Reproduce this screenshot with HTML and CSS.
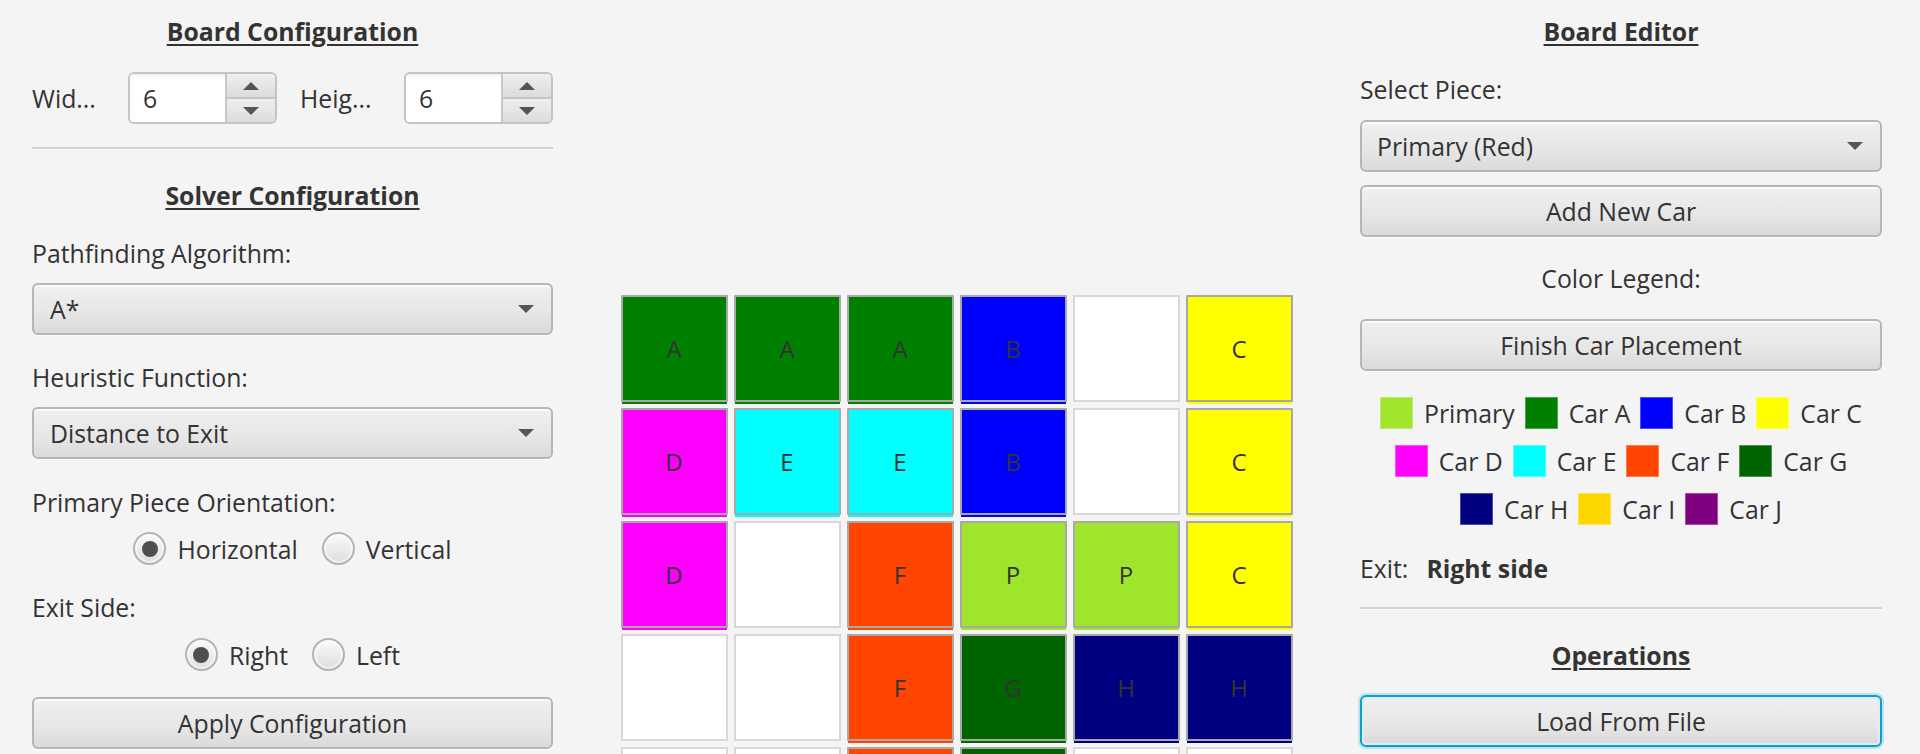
FILE: index.html
```html
<!DOCTYPE html>
<html lang="en">
<head>
<meta charset="utf-8">
<title>Rush Hour Solver</title>
<link rel="stylesheet" href="styles.css">
</head>
<body>
<div class="app">
  <aside class="panel panel-left">
    <div class="title">Board Configuration</div>
    <div class="dim-row">
      <span class="dim-label dim-label-w">Wid...</span>
      <div class="spinner">
        <div class="spinner-field">6</div>
        <div class="spinner-buttons">
          <div class="spin-btn"><span class="arrow-up"></span></div>
          <div class="spin-btn"><span class="arrow-down"></span></div>
        </div>
      </div>
      <span class="dim-label dim-label-h">Heig...</span>
      <div class="spinner">
        <div class="spinner-field">6</div>
        <div class="spinner-buttons">
          <div class="spin-btn"><span class="arrow-up"></span></div>
          <div class="spin-btn"><span class="arrow-down"></span></div>
        </div>
      </div>
    </div>
    <div class="separator sep-left"></div>
    <div class="title title-solver">Solver Configuration</div>
    <div class="label lbl-algo">Pathfinding Algorithm:</div>
    <div class="combo combo-algo">A*</div>
    <div class="label lbl-heur">Heuristic Function:</div>
    <div class="combo combo-heur">Distance to Exit</div>
    <div class="label lbl-orient">Primary Piece Orientation:</div>
    <div class="radio-row radio-row-orient">
      <div class="radio-item"><span class="radio radio-on"></span><span>Horizontal</span></div>
      <div class="radio-item"><span class="radio"></span><span>Vertical</span></div>
    </div>
    <div class="label lbl-exit">Exit Side:</div>
    <div class="radio-row radio-row-exit">
      <div class="radio-item"><span class="radio radio-on"></span><span>Right</span></div>
      <div class="radio-item"><span class="radio"></span><span>Left</span></div>
    </div>
    <div class="btn btn-apply">Apply Configuration</div>
  </aside>

  <main class="board-area">
    <div class="board">
      <div class="cell car" style="--c:#008000">A</div>
      <div class="cell car" style="--c:#008000">A</div>
      <div class="cell car" style="--c:#008000">A</div>
      <div class="cell car" style="--c:#0000ff">B</div>
      <div class="cell empty"></div>
      <div class="cell car" style="--c:#ffff00">C</div>

      <div class="cell car" style="--c:#ff00ff">D</div>
      <div class="cell car" style="--c:#00ffff">E</div>
      <div class="cell car" style="--c:#00ffff">E</div>
      <div class="cell car" style="--c:#0000ff">B</div>
      <div class="cell empty"></div>
      <div class="cell car" style="--c:#ffff00">C</div>

      <div class="cell car" style="--c:#ff00ff">D</div>
      <div class="cell empty"></div>
      <div class="cell car" style="--c:#ff4500">F</div>
      <div class="cell car" style="--c:#9fe52c">P</div>
      <div class="cell car" style="--c:#9fe52c">P</div>
      <div class="cell car" style="--c:#ffff00">C</div>

      <div class="cell empty"></div>
      <div class="cell empty"></div>
      <div class="cell car" style="--c:#ff4500">F</div>
      <div class="cell car" style="--c:#006400">G</div>
      <div class="cell car" style="--c:#000080">H</div>
      <div class="cell car" style="--c:#000080">H</div>

      <div class="cell empty"></div>
      <div class="cell empty"></div>
      <div class="cell car" style="--c:#ff4500"></div>
      <div class="cell car" style="--c:#006400"></div>
      <div class="cell empty"></div>
      <div class="cell empty"></div>
    </div>
  </main>

  <aside class="panel panel-right">
    <div class="title">Board Editor</div>
    <div class="label lbl-select">Select Piece:</div>
    <div class="combo combo-piece">Primary (Red)</div>
    <div class="btn btn-add">Add New Car</div>
    <div class="label label-center lbl-legend">Color Legend:</div>
    <div class="btn btn-finish">Finish Car Placement</div>
    <div class="legend">
      <div class="legend-row">
        <div class="legend-item"><span class="swatch" style="--c:#9fe52c"></span><span>Primary</span></div>
        <div class="legend-item"><span class="swatch" style="--c:#008000"></span><span>Car A</span></div>
        <div class="legend-item"><span class="swatch" style="--c:#0000ff"></span><span>Car B</span></div>
        <div class="legend-item"><span class="swatch" style="--c:#ffff00"></span><span>Car C</span></div>
      </div>
      <div class="legend-row">
        <div class="legend-item"><span class="swatch" style="--c:#ff00ff"></span><span>Car D</span></div>
        <div class="legend-item"><span class="swatch" style="--c:#00ffff"></span><span>Car E</span></div>
        <div class="legend-item"><span class="swatch" style="--c:#ff4500"></span><span>Car F</span></div>
        <div class="legend-item"><span class="swatch" style="--c:#006400"></span><span>Car G</span></div>
      </div>
      <div class="legend-row">
        <div class="legend-item"><span class="swatch" style="--c:#000080"></span><span>Car H</span></div>
        <div class="legend-item"><span class="swatch" style="--c:#ffd700"></span><span>Car I</span></div>
        <div class="legend-item"><span class="swatch" style="--c:#800080"></span><span>Car J</span></div>
      </div>
    </div>
    <div class="exit-row"><span>Exit:</span><span class="exit-value">Right side</span></div>
    <div class="separator sep-right"></div>
    <div class="title title-ops">Operations</div>
    <div class="btn btn-focused btn-load">Load From File</div>
  </aside>
</div>
</body>
</html>
```

FILE: styles.css
```css
html, body {
  margin: 0;
  padding: 0;
  height: 754px;
  overflow: hidden;
  background: #f4f4f4;
}

body {
  font-family: "Open Sans", "Noto Sans", sans-serif;
  font-size: 24.8px;
  color: #333333;
}

.app {
  display: flex;
  height: 754px;
  padding: 0 38px 0 32px;
  box-sizing: border-box;
  overflow: hidden;
}

.panel {
  flex: none;
  display: flex;
  flex-direction: column;
  padding-top: 14px;
}

.panel-left { width: 521px; }
.panel-right { width: 522px; }

.title {
  height: 32px;
  line-height: 35px;
  text-align: center;
  font-weight: 700;
  text-decoration: underline;
  text-decoration-thickness: 2px;
  text-underline-offset: 3px;
  white-space: nowrap;
}

.label {
  height: 32px;
  line-height: 35px;
  white-space: nowrap;
}

.label-center { text-align: center; }

/* ---------- spinner row ---------- */
.dim-row {
  display: flex;
  align-items: center;
  margin-top: 26px;
  height: 52px;
}

.dim-label { white-space: nowrap; }
.dim-label-w { width: 96px; }
.dim-label-h { width: 104px; margin-left: 23px; }

.spinner {
  width: 149px;
  height: 52px;
  box-sizing: border-box;
  border: 2px solid #c4c4c4;
  border-radius: 6px;
  display: flex;
  overflow: hidden;
  background: #ffffff;
}

.spinner-field {
  flex: 1;
  padding-left: 13px;
  line-height: 48px;
  background: linear-gradient(to bottom, #f0f0f0 0, #ffffff 4px);
}

.spinner-buttons {
  width: 48px;
  display: flex;
  flex-direction: column;
  border-left: 2px solid #c8c8c8;
}

.spin-btn {
  flex: 1;
  display: flex;
  align-items: center;
  justify-content: center;
  background: linear-gradient(to bottom, #efefef, #dcdcdc);
}

.spin-btn + .spin-btn { border-top: 2px solid #c4c4c4; }

.arrow-up {
  width: 0;
  height: 0;
  border-left: 8px solid transparent;
  border-right: 8px solid transparent;
  border-bottom: 8px solid #555555;
}

.arrow-down {
  width: 0;
  height: 0;
  border-left: 8px solid transparent;
  border-right: 8px solid transparent;
  border-top: 8px solid #555555;
}

/* ---------- separators ---------- */
.separator {
  height: 2px;
  background: #d3d3d3;
  border-bottom: 1px solid #fbfbfb;
}

.sep-left { margin-top: 23px; }
.sep-right { margin-top: 24px; }

/* ---------- combo & buttons ---------- */
.combo,
.btn {
  height: 52px;
  box-sizing: border-box;
  border: 2px solid #b6b6b6;
  border-radius: 6px;
  background: linear-gradient(to bottom, #f0f0f0 0%, #e6e6e6 60%, #dadada 100%);
  box-shadow: inset 0 2px 0 rgba(255, 255, 255, 0.75), 0 1px 0 rgba(255, 255, 255, 0.9);
  line-height: 48px;
  white-space: nowrap;
}

.combo {
  position: relative;
  padding-left: 16px;
}

.combo::after {
  content: "";
  position: absolute;
  right: 17px;
  top: 20px;
  width: 0;
  height: 0;
  border-left: 8px solid transparent;
  border-right: 8px solid transparent;
  border-top: 8px solid #555555;
}

.combo-piece { padding-left: 15px; }

.btn { text-align: center; }

.btn-focused {
  border-color: #0b9fd6;
  box-shadow: inset 0 0 0 2px #dcedf4, 0 0 0 2px rgba(3, 158, 211, 0.22);
}

/* ---------- left panel spacing ---------- */
.title-solver { margin-top: 28px; }
.lbl-algo { margin-top: 26px; }
.combo-algo { margin-top: 15px; }
.lbl-heur { margin-top: 25px; }
.combo-heur { margin-top: 15px; }
.lbl-orient { margin-top: 26px; }
.radio-row-orient { margin-top: 15px; }
.lbl-exit { margin-top: 25px; }
.radio-row-exit { margin-top: 16px; }
.btn-apply { margin-top: 26px; }

/* ---------- radios ---------- */
.radio-row {
  display: flex;
  justify-content: center;
  align-items: center;
  gap: 24px;
  height: 33px;
}

.radio-item {
  display: flex;
  align-items: center;
  gap: 11px;
  white-space: nowrap;
}

.radio {
  width: 33px;
  height: 33px;
  box-sizing: border-box;
  border-radius: 50%;
  border: 2px solid #b4b4b4;
  background: linear-gradient(to bottom, #fafafa, #dedede);
  box-shadow: inset 0 0 0 2px rgba(255, 255, 255, 0.55);
  display: flex;
  align-items: center;
  justify-content: center;
}

.radio-on::after {
  content: "";
  width: 16px;
  height: 16px;
  border-radius: 50%;
  background: #4e4e4e;
}

/* ---------- board ---------- */
.board-area {
  flex: 1;
  display: flex;
  justify-content: center;
  padding-top: 295px;
  overflow: hidden;
}

.board {
  display: grid;
  grid-template-columns: repeat(6, 107px);
  grid-auto-rows: 107px;
  gap: 6px;
  align-self: flex-start;
}

.cell {
  box-sizing: border-box;
  display: flex;
  align-items: center;
  justify-content: center;
  font-size: 24px;
  color: #333333;
}

.car {
  background: var(--c);
  border: 2px solid #a8a8a8;
  box-shadow: 0 3px 0 -1px var(--c);
  border-radius: 1px;
}

.empty {
  background: #ffffff;
  border: 2px solid #d8d8d8;
}

/* ---------- right panel spacing ---------- */
.lbl-select { margin-top: 26px; }
.combo-piece { margin-top: 16px; }
.btn-add { margin-top: 13px; }
.lbl-legend { margin-top: 24px; line-height: 34px; }
.btn-finish { margin-top: 26px; }

.legend {
  margin-top: 26px;
  display: flex;
  flex-direction: column;
  gap: 16px;
}

.legend-row {
  display: flex;
  justify-content: center;
  gap: 10px;
  height: 32px;
}

.legend-item {
  display: flex;
  align-items: center;
  gap: 11px;
  line-height: 34px;
  white-space: nowrap;
}

.swatch {
  width: 33px;
  height: 32px;
  background: var(--c);
  box-shadow: inset 0 0 0 1px rgba(255, 255, 255, 0.3);
}

.exit-row {
  margin-top: 26px;
  height: 32px;
  line-height: 34px;
  display: flex;
  white-space: nowrap;
}

.exit-value {
  margin-left: 18px;
  font-weight: 700;
}

.title-ops { margin-top: 28px; }
.btn-load { margin-top: 25px; }
```
